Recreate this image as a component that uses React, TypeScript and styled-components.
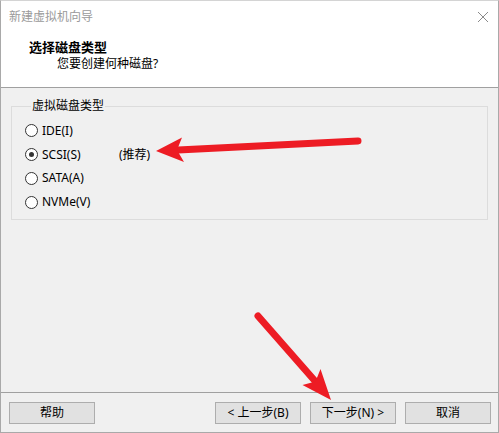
import React from "react";
import styled, { createGlobalStyle } from "styled-components";

const Global = createGlobalStyle`
  html, body { margin: 0; padding: 0; background: #ffffff; }
  body { font-family: "Noto Sans CJK SC", "Noto Sans", sans-serif; }
  * { box-sizing: border-box; }
`;

const FONT = `"Noto Sans", "Noto Sans CJK SC", sans-serif`;

const Window = styled.div`
  position: relative;
  width: 499px;
  height: 433px;
  border: 1px solid #a9a9a9;
  border-top-color: #d4d4d4;
  display: flex;
  flex-direction: column;
  background: #f0f0f0;
  font-family: ${FONT};
  font-size: 12px;
  color: #000;
  overflow: hidden;
`;

const Header = styled.div`
  height: 87px;
  background: #ffffff;
  border-bottom: 1px solid #a0a0a0;
  display: flex;
  flex-direction: column;
`;

const TitleBar = styled.div`
  height: 29px;
  display: flex;
  align-items: center;
  justify-content: space-between;
  padding: 0 9px 0 8px;
`;

const Title = styled.span`
  color: #9a9a9a;
  font-size: 12px;
  line-height: 14px;
  padding-top: 2px;
`;

const CloseButton = styled.span`
  width: 12px;
  height: 12px;
  display: flex;
  margin-top: 2px;
`;

const Heading = styled.div`
  margin: 9px 0 0 28px;
  font-size: 13px;
  font-weight: 700;
  line-height: 16px;
`;

const SubHeading = styled.div`
  margin: 1px 0 0 56px;
  font-size: 12px;
  line-height: 16px;
`;

const Body = styled.div`
  flex: 1;
  padding: 11px 10px 0 10px;
`;

const GroupBox = styled.fieldset`
  margin: 0;
  width: 477px;
  height: 121px;
  border: 1px solid #dcdcdc;
  padding: 6px 0 0 13px;
  display: flex;
  flex-direction: column;
`;

const Legend = styled.legend`
  padding: 0 1px;
  margin-left: 6px;
  font-size: 12px;
  line-height: 14px;
`;

const Option = styled.label`
  height: 23.8px;
  display: flex;
  align-items: center;
  gap: 4px;
  font-size: 12px;
  line-height: 14px;
`;

const Radio = styled.span<{ $checked?: boolean }>`
  width: 13px;
  height: 13px;
  border-radius: 50%;
  border: 1px solid #333333;
  background: #ffffff;
  display: flex;
  align-items: center;
  justify-content: center;
  &::after {
    content: "";
    width: 5px;
    height: 5px;
    border-radius: 50%;
    background: ${(p) => (p.$checked ? "#333333" : "transparent")};
  }
`;

const OptionText = styled.span<{ $width?: number }>`
  display: inline-block;
  width: ${(p) => (p.$width ? `${p.$width}px` : "auto")};
`;

const Footer = styled.div`
  height: 40px;
  border-top: 1px solid #a0a0a0;
  display: flex;
  align-items: flex-start;
  padding: 9px 7px 0 8px;
  gap: 9px;
`;

const Spacer = styled.div`
  flex: 1;
`;

const Button = styled.button`
  width: 86px;
  height: 22px;
  margin: 0;
  padding: 0;
  border: 1px solid #adadad;
  background: #e1e1e1;
  font-family: ${FONT};
  font-size: 12px;
  line-height: 14px;
  color: #000;
  display: flex;
  align-items: center;
  justify-content: center;
`;

const Overlay = styled.svg`
  position: absolute;
  left: -1px;
  top: -1px;
  pointer-events: none;
`;

const options = [
  { label: "IDE(I)", checked: false },
  { label: "SCSI(S)", checked: true, note: "(推荐)" },
  { label: "SATA(A)", checked: false },
  { label: "NVMe(V)", checked: false },
];

export default function App() {
  return (
    <>
      <Global />
      <Window>
        <Header>
          <TitleBar>
            <Title>新建虚拟机向导</Title>
            <CloseButton>
              <svg width="12" height="12" viewBox="0 0 12 12">
                <path d="M1 1 L11 11 M11 1 L1 11" stroke="#8a8a8a" strokeWidth="1" fill="none" />
              </svg>
            </CloseButton>
          </TitleBar>
          <Heading>选择磁盘类型</Heading>
          <SubHeading>您要创建何种磁盘?</SubHeading>
        </Header>
        <Body>
          <GroupBox>
            <Legend>虚拟磁盘类型</Legend>
            {options.map((o) => (
              <Option key={o.label}>
                <Radio $checked={o.checked} />
                <OptionText $width={o.note ? 73 : undefined}>{o.label}</OptionText>
                {o.note && <span>{o.note}</span>}
              </Option>
            ))}
          </GroupBox>
        </Body>
        <Footer>
          <Button>帮助</Button>
          <Spacer />
          <Button>&lt; 上一步(B)</Button>
          <Button>下一步(N) &gt;</Button>
          <Button>取消</Button>
        </Footer>
        {/* red annotation arrows drawn over the dialog */}
        <Overlay width="499" height="433" viewBox="0 0 499 433">
          <g fill="#ed1c24" stroke="#ed1c24">
            <line x1="358" y1="141" x2="178" y2="150" strokeWidth="7" strokeLinecap="round" />
            <polygon points="156,151 182,137.5 177,150 184,162" stroke="none" />
            <line x1="258" y1="316" x2="315" y2="381" strokeWidth="7" strokeLinecap="round" />
            <polygon points="331,400 302.5,385 315.5,381.5 320.5,369" stroke="none" />
          </g>
        </Overlay>
      </Window>
    </>
  );
}
